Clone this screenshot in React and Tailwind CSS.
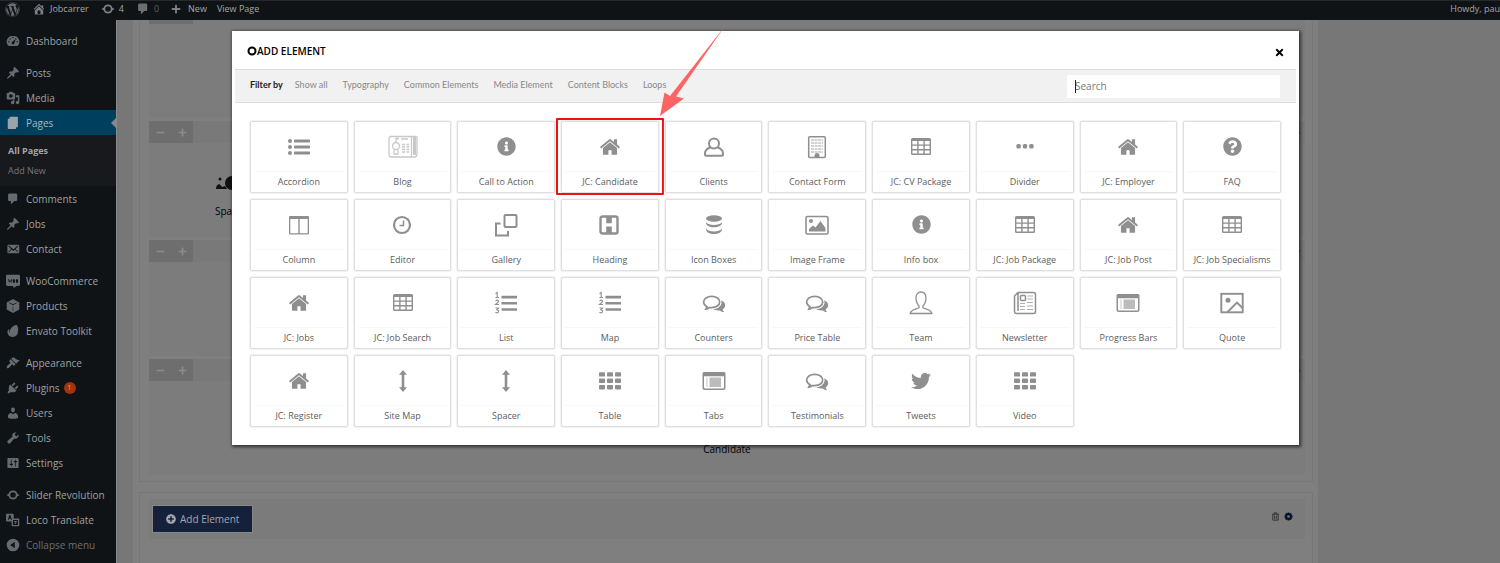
import React from "react";
import { FaWordpress, FaTwitter, FaPlus, FaMinus, FaTimes, FaInfoCircle, FaQuestionCircle, FaPlusCircle } from "react-icons/fa";

const Dash = ({ d, className = "size-[14px]" }) => (
  <svg viewBox="0 0 20 20" fill="currentColor" fillRule="evenodd" className={className} aria-hidden="true">
    <path d={d} />
  </svg>
);

const paths = {
  home: "M16 8.5l1.53 1.53-1.06 1.06L10 4.6l-6.47 6.49-1.06-1.06L10 2.5l4 4v-2h2v4zm-6-2.46l6 5.99V18H4v-5.97zM12 17v-5H8v5h4z",
  dashboard:
    "M3.76 17h12.48A7.998 7.998 0 0 0 10 3a7.998 7.998 0 0 0-6.24 14zM10 4c.55 0 1 .45 1 1s-.45 1-1 1-1-.45-1-1 .45-1 1-1zM6 6c.55 0 1 .45 1 1s-.45 1-1 1-1-.45-1-1 .45-1 1-1zm8 0c.55 0 1 .45 1 1s-.45 1-1 1-1-.45-1-1 .45-1 1-1zm-5.37 5.55L14 7l-2 6c0 1.1-.9 2-2 2s-2-.9-2-2c0-.57.24-1.08.63-1.45zM4 10c.55 0 1 .45 1 1s-.45 1-1 1-1-.45-1-1 .45-1 1-1zm12 0c.55 0 1 .45 1 1s-.45 1-1 1-1-.45-1-1 .45-1 1-1z",
  pin: "M10.44 3.02l1.82-1.82 6.36 6.35-1.83 1.82c-1.05-.68-2.48-.57-3.41.36l-.75.75c-.92.93-1.04 2.35-.35 3.41l-1.83 1.82-2.41-2.41-2.8 2.79c-.42.42-3.38 2.71-3.8 2.29s1.86-3.39 2.28-3.81l2.79-2.79L4.1 9.36l1.83-1.82c1.05.69 2.48.57 3.4-.36l.75-.75c.93-.92 1.05-2.35.36-3.41z",
  media:
    "M13 11V4c0-.55-.45-1-1-1h-1.67L9 1H5L3.67 3H2c-.55 0-1 .45-1 1v7c0 .55.45 1 1 1h10c.55 0 1-.45 1-1zM7 4.5c1.38 0 2.5 1.12 2.5 2.5S8.38 9.5 7 9.5 4.5 8.38 4.5 7 5.62 4.5 7 4.5zM14 6h5v10.5c0 1.38-1.12 2.5-2.5 2.5S14 17.88 14 16.5s1.12-2.5 2.5-2.5c.17 0 .34.02.5.05V9h-3V6zm-4 8.05V13h2v3.5c0 1.38-1.12 2.5-2.5 2.5S7 17.88 7 16.5 8.12 14 9.5 14c.17 0 .34.02.5.05z",
  page: "M6 1h10a1 1 0 0 1 1 1v13a1 1 0 0 1-1 1h-1.5v1.500a1 1 0 0 1-1 1H3.500a1 1 0 0 1-1-1V5a1 1 0 0 1 1-1H5V2a1 1 0 0 1 1-1z",
  comment: "M5 2h9c1.100 0 2 .9 2 2v7c0 1.100-.9 2-2 2h-2l-5 5v-5H5c-1.100 0-2-.9-2-2V4c0-1.100.9-2 2-2z",
  mail: "M19 14.5v-9c0-.83-.67-1.5-1.5-1.5H3.49c-.83 0-1.5.67-1.5 1.5v9c0 .83.67 1.5 1.5 1.5H17.5c.83 0 1.5-.67 1.5-1.5zm-1.31-9.11c.33.33.15.67-.03.84L13.6 9.95l3.9 4.06c.12.14.2.36.06.51-.13.16-.43.15-.56.05l-4.37-3.73-2.14 1.95-2.13-1.95-4.37 3.73c-.13.1-.43.11-.56-.05-.14-.15-.06-.37.06-.51l3.9-4.06-4.06-3.72c-.18-.17-.36-.51-.03-.84s.67-.17.95.07l6.24 5.04 6.25-5.04c.28-.24.62-.4.95-.07z",
  appearance:
    "M14.48 11.06L7.41 3.99l1.5-1.5c.5-.56 2.3-.47 3.51.32 1.21.8 1.43 1.28 2.91 2.1 1.18.64 2.45 1.26 4.45.85zm-.71.71L6.7 4.7 4.93 6.47c-.39.39-.39 1.02 0 1.41l1.06 1.06c.39.39.39 1.03 0 1.42-.6.6-1.43 1.11-2.21 1.69-.35.26-.7.53-1.01.84C1.43 14.23.4 16.08 1.4 17.07c.99 1 2.84-.03 4.18-1.36.31-.31.58-.66.85-1.02.57-.78 1.08-1.61 1.69-2.21.39-.39 1.02-.39 1.41 0l1.06 1.06c.39.39 1.02.39 1.41 0z",
  plugins:
    "M13.11 4.36L9.87 7.6 8 5.73l3.24-3.24c.35-.34 1.05-.2 1.56.32.52.51.66 1.21.31 1.55zm-8 1.77l.91-1.12 9.01 9.01-1.19.84c-.71.71-2.63 1.16-3.82 1.16H6.14L4.9 17.26c-.59.59-1.54.59-2.12 0-.59-.58-.59-1.53 0-2.12l1.24-1.24v-3.88c0-1.13.4-3.19 1.09-3.89zm7.26 3.97l3.24-3.24c.34-.35 1.04-.21 1.55.31.52.51.66 1.21.31 1.55l-3.24 3.25z",
  users:
    "M10 9.25c-2.27 0-2.73-3.44-2.73-3.44C7 4.02 7.82 2 9.97 2c2.16 0 2.98 2.02 2.71 3.81 0 0-.41 3.44-2.68 3.44zm0 2.57L12.72 10c2.39 0 4.52 2.33 4.52 4.53v2.49s-3.65 1.13-7.24 1.13c-3.65 0-7.24-1.13-7.24-1.13v-2.49c0-2.25 1.94-4.48 4.47-4.48z",
  tools:
    "M16.68 9.77c-1.34 1.34-3.3 1.67-4.95.99l-5.41 6.52c-.99.99-2.59.99-3.58 0s-.99-2.59 0-3.57l6.52-5.42c-.68-1.65-.35-3.61.99-4.95 1.28-1.28 3.12-1.62 4.72-1.06l-2.89 2.89 2.82 2.82 2.86-2.87c.53 1.58.18 3.39-1.08 4.65z",
  settings:
    "M18 16V4c0-.55-.45-1-1-1H3c-.55 0-1 .45-1 1v12c0 .55.45 1 1 1h14c.55 0 1-.45 1-1zM8 11h1c.55 0 1 .45 1 1s-.45 1-1 1H8v1.5c0 .28-.22.5-.5.5s-.5-.22-.5-.5V13H6c-.55 0-1-.45-1-1s.45-1 1-1h1V5.5c0-.28.22-.5.5-.5s.5.22.5.5V11zm5-2h-1c-.55 0-1-.45-1-1s.45-1 1-1h1V5.5c0-.28.22-.5.5-.5s.5.22.5.5V7h1c.55 0 1 .45 1 1s-.45 1-1 1h-1v5.5c0 .28-.22.5-.5.5s-.5-.22-.5-.5V9z",
  update:
    "M10 3.500a6.500 6.500 0 0 1 6.200 4.700L19.500 10l-3.300 1.800a6.500 6.500 0 0 1-12.400 0L.5 10l3.300-1.800A6.500 6.500 0 0 1 10 3.500zM10 6a4 4 0 1 0 0 8 4 4 0 1 0 0-8z",
  woo: "M2 1h16a2 2 0 0 1 2 2v12a2 2 0 0 1-2 2h-3l-4 3-1-3H2a2 2 0 0 1-2-2V3a2 2 0 0 1 2-2zm1 6l1.500 6L6 9.500 7.500 13 8.500 7H7.600L7 10 6 8l-1.200 2L4 7zm6.500 3a1.700 3 0 1 0 3.400 0 1.700 3 0 1 0-3.400 0zm4.500 0a1.700 3 0 1 0 3.400 0 1.700 3 0 1 0-3.400 0z",
  products:
    "M10 0l9 5v10l-9 5-9-5V5zM4 5.500l6 3.300 6-3.300-.8-.6L10 7.600 4.900 4.900zM9.600 11v6.500h.8V11z",
  envato: "M15.500 1.500c2.500 3 2.500 10 .5 13.500-2 3.400-7.500 4.800-11 2.200C1.500 14.500 1.500 10 3.500 8c.6-.6 1.300-.2 1.200.6-.3 2 0 3.400.7 4.400C4.500 7.500 9 2 15.500 1.500z",
  collapse: "M10 1a9 9 0 1 0 0 18 9 9 0 1 0 0-18zm2.500 4.500v9L6 10z",
  translate:
    "M1 1h9a1 1 0 0 1 1 1v6h7a1 1 0 0 1 1 1v9a1 1 0 0 1-1 1H9a1 1 0 0 1-1-1v-6H1a1 1 0 0 1-1-1V2a1 1 0 0 1 1-1zm3.800 2L2.500 9.500H4L4.500 8h2L7 9.500h1.500L6.200 3zM10 10v7h7v-7zm1.500 1.500h4v1.200h-1v3h-2v-1.200h.8v-1.800h-1.800z",
};

const menu = [
  [{ label: "Dashboard", icon: "dashboard" }],
  [
    { label: "Posts", icon: "pin" },
    { label: "Media", icon: "media" },
    { label: "Pages", icon: "page", active: true, sub: ["All Pages", "Add New"] },
    { label: "Comments", icon: "comment" },
    { label: "Jobs", icon: "pin" },
    { label: "Contact", icon: "mail" },
  ],
  [
    { label: "WooCommerce", icon: "woo" },
    { label: "Products", icon: "products" },
    { label: "Envato Toolkit", icon: "envato" },
  ],
  [
    { label: "Appearance", icon: "appearance" },
    { label: "Plugins", icon: "plugins", badge: "1" },
    { label: "Users", icon: "users" },
    { label: "Tools", icon: "tools" },
    { label: "Settings", icon: "settings" },
  ],
  [
    { label: "Slider Revolution", icon: "update" },
    { label: "Loco Translate", icon: "translate" },
    { label: "Collapse menu", icon: "collapse", muted: true },
  ],
];

/* Element glyphs share one 24x24 canvas */
const Glyph = ({ children }) => (
  <svg viewBox="0 0 24 24" fill="currentColor" className="size-6" aria-hidden="true">
    {children}
  </svg>
);

const line = { fill: "none", stroke: "currentColor", strokeWidth: 1.6 };

const glyphs = {
  list: (
    <Glyph>
      {[6, 12, 18].map((y) => (
        <g key={y}>
          <circle cx="3" cy={y} r="2" />
          <rect x="7" y={y - 1.4} width="16" height="2.800" rx=".6" />
        </g>
      ))}
    </Glyph>
  ),
  blog: (
    <svg viewBox="0 0 30 24" className="h-6 w-[30px] text-[#c8c8c8]" fill="none" stroke="currentColor" strokeWidth="1.300" aria-hidden="true">
      <path d="M1 3.500q0-2 2-2h20.500v20.500H3q-2 0-2-2z M23.500 1.500h4q1.500 0 1.500 1.500v16q0 3-2.800 3h-2.700z" />
      <path d="M26.500 2v18" strokeWidth="3" />
      <circle cx="8" cy="11" r="3.500" />
      <path d="M8 7V3.500h3 M13 4h7 M6 14.500V19h4v-4.500 M14 9.500h3 M14 12h3 M14 14.500h3 M14 17h3 M18.500 9.500h2.500 M18.500 12h2.500 M18.500 14.500h2.500 M18.500 17h2.500" />
    </svg>
  ),
  info: <FaInfoCircle className="size-[19px]" aria-hidden="true" />,
  question: <FaQuestionCircle className="size-[19px]" aria-hidden="true" />,
  home: (
    <svg viewBox="0 0 1792 1792" fill="currentColor" className="size-[22px]" aria-hidden="true">
      <path d="M1472 992v480q0 26-19 45t-45 19h-384v-384h-256v384h-384q-26 0-45-19t-19-45v-480q0-1 .5-3t.5-3l575-474 575 474q1 2 1 6zm223-69l-62 74q-8 9-21 11h-3q-13 0-21-7l-692-577-692 577q-12 8-24 7-13-2-21-11l-62-74q-8-10-7-23.500t11-21.500l719-599q32-26 76-26t76 26l244 204v-195q0-14 9-23t23-9h192q14 0 23 9t9 23v408l219 182q10 8 11 21.500t-7 23.500z" />
    </svg>
  ),
  person: (
    <Glyph>
      <path {...line} strokeWidth="2" d="M8.500 12.500C5 13.500 3 15.500 3 18.500v1.200q0 1 1 1h16q1 0 1-1v-1.200c0-3-2-5-5.500-6" />
      <circle {...line} strokeWidth="2" cx="12" cy="8.500" r="5" />
    </Glyph>
  ),
  form: (
    <Glyph>
      <rect {...line} strokeWidth="1.500" x="3.700" y="1.800" width="16.600" height="20.800" rx="1" />
      <path {...line} strokeWidth="1" strokeDasharray="3 .6" opacity=".8" d="M6 5h12 M6 8h12 M6 11h12 M6 14h12 M6 17h12" />
      <path d="M9.500 22v-1.500a2.500 2.500 0 0 1 5 0V22z" />
    </Glyph>
  ),
  table: (
    <Glyph>
      <path fillRule="evenodd" d="M3.500 3h17A1.500 1.500 0 0 1 22 4.500v14a1.500 1.500 0 0 1-1.500 1.500h-17A1.500 1.500 0 0 1 2 18.500v-14A1.500 1.500 0 0 1 3.500 3zM3.400 6v3.400h4.800V6zm6.200 0v3.400h4.800V6zm6.200 0v3.400h4.800V6zM3.400 10.800v3.200h4.800v-3.200zm6.200 0v3.200h4.800v-3.200zm6.200 0v3.200h4.800v-3.200zM3.400 15.400v3.200h4.800v-3.200zm6.200 0v3.200h4.800v-3.200zm6.200 0v3.200h4.800v-3.200z" />
    </Glyph>
  ),
  dots: (
    <Glyph>
      {[5.600, 12, 18.400].map((x) => (
        <rect key={x} x={x - 2.200} y="9" width="4.400" height="4.400" rx="1.500" />
      ))}
    </Glyph>
  ),
  columns: (
    <Glyph>
      <path fillRule="evenodd" d="M3 3h18a1 1 0 0 1 1 1v16.500a1 1 0 0 1-1 1H3a1 1 0 0 1-1-1V4a1 1 0 0 1 1-1zm.3 3v14.200h8V6zm9.400 0v14.200h8V6z" />
    </Glyph>
  ),
  clock: (
    <Glyph>
      <circle {...line} strokeWidth="2.200" cx="11" cy="12" r="8" />
      <path {...line} strokeWidth="1.500" d="M12.500 7.500v5H8.500" />
    </Glyph>
  ),
  gallery: (
    <Glyph>
      <rect {...line} strokeWidth="2" x="10.500" y="2" width="12" height="12" rx="1" />
      <path {...line} strokeWidth="2" d="M6.500 10.500h-4.500v12h12v-4.500" />
    </Glyph>
  ),
  heading: (
    <Glyph>
      <rect {...line} strokeWidth="2.400" x="2.500" y="3.500" width="17" height="17" rx="2" />
      <path d="M8.200 4h5.600v6.200H8.200z M8.200 13.500h5.600V20H8.200z" />
    </Glyph>
  ),
  database: (
    <Glyph>
      <ellipse cx="12" cy="5.500" rx="8" ry="3.200" />
      <path d="M4 9.200c1.500 2 4.500 2.700 8 2.700s6.500-.7 8-2.700c.3 3.500-3.500 5-8 5s-8.300-1.500-8-5z M4 15.500c1.500 2.200 4.500 3 8 3s6.500-.8 8-3c.3 3.700-3.500 5.500-8 5.500s-8.300-1.800-8-5.500z" />
    </Glyph>
  ),
  image: (
    <Glyph>
      <rect {...line} x="1" y="3.500" width="22" height="17.500" rx="1.500" />
      <circle cx="6" cy="8" r="2" />
      <path d="M4 18.500v-2.500l4-3.500 2.500 2 5-6.500 5 7v3.500z" />
    </Glyph>
  ),
  numbers: (
    <Glyph>
      <path d="M7.500 4.800h15.500v2.600H7.500z M7.500 11h15.500v2.600H7.500z M7.500 17.200h15.500v2.600H7.500z" />
      <path {...line} strokeWidth="1.100" d="M1.500 2.500l1.700-1v5 M1.500 6.500h3.500 M1.500 9.800q3-1.500 3 .5 0 1-3 3.200h3.500 M1.500 17h3l-1.700 1.800q2 .2 1.700 2-.8 1.600-3.200.7" />
    </Glyph>
  ),
  comments: (
    <Glyph>
      <path {...line} strokeWidth="1.700" d="M9.700 5.300c4.600 0 8 2.500 8 5.700s-3.400 5.700-8 5.700c-.8 0-1.500-.1-2.200-.2q-1.700 1.400-3.700 1.600l1.200-2.400C3 14.600 1.600 13 1.600 11c0-3.200 3.500-5.700 8.100-5.700z" />
      <path d="M19.200 9.300c2.400 1 4 2.800 4 4.900 0 1.700-1 3.200-2.600 4.200.2 1.100.8 1.900 1.700 2.600-1.700 0-3.300-.7-4.400-1.600-2.600.4-5.200-.1-7-1.300 5.400 0 10-3.600 8.300-8.800z" />
    </Glyph>
  ),
  team: (
    <Glyph>
      <path {...line} strokeWidth="1.300" d="M12 1c3.500 0 5 2.800 5 6.300 0 3.300-1.700 6.700-3 7.500v2c2.500 1.500 8 1.700 8.800 5.700H1.200C2 18.500 7.500 18.300 10 16.800v-2c-1.300-.8-3-4.200-3-7.500C7 3.800 8.500 1 12 1z" />
    </Glyph>
  ),
  news: (
    <Glyph>
      <path {...line} strokeWidth="1.500" d="M5 1.500h15.500q2 0 2 2v17q0 2-2 2H3.500q-2 0-2-2V5z M5 1.500V20" />
      <rect {...line} strokeWidth="1.500" x="7.500" y="4.500" width="5" height="5" rx="1" />
      <path {...line} strokeWidth="1.200" opacity=".7" d="M14.500 5h5.500 M14.500 8h5.500 M7 12.500h5 M14 11.500h6 M7 15.500h5 M14 15h6 M7 18.500h5 M14 18.500h6" />
    </Glyph>
  ),
  browser: (
    <Glyph>
      <path fillRule="evenodd" d="M2 3h20a1.500 1.500 0 0 1 1.500 1.500v14.500a2 2 0 0 1-2 2h-19a2 2 0 0 1-2-2V4.500A1.500 1.500 0 0 1 2 3zm0 4.200v11.300a1 1 0 0 0 1 1h18a1 1 0 0 0 1-1V7.200z" />
      <rect x="7.500" y="8.500" width="11.500" height="9.500" opacity=".6" />
      <rect x="4" y="8.500" width="2" height="9.500" opacity=".25" />
    </Glyph>
  ),
  picture: (
    <Glyph>
      <rect {...line} strokeWidth="1.900" x="1.300" y="2.800" width="21.400" height="18.500" />
      <circle cx="8" cy="9.200" r="2.500" />
      <path {...line} strokeWidth="1.900" d="M7.500 21l9.500-9.500 5.500 5.500" />
    </Glyph>
  ),
  vertical: (
    <Glyph>
      <path d="M12 1l4 4.800h-2.700v12.400H16L12 23l-4-4.800h2.700V5.800H8z" />
    </Glyph>
  ),
  grid: (
    <Glyph>
      {[3.200, 9.600, 16].map((y) =>
        [1, 9, 17].map((x) => <rect key={x + "-" + y} x={x} y={y} width="6" height="4.400" rx=".9" />)
      )}
    </Glyph>
  ),
  twitter: <FaTwitter className="size-5" aria-hidden="true" />,
};

const elements = [
  ["Accordion", "list"], ["Blog", "blog"], ["Call to Action", "info"], ["JC: Candidate", "home"], ["Clients", "person"],
  ["Contact Form", "form"], ["JC: CV Package", "table"], ["Divider", "dots"], ["JC: Employer", "home"], ["FAQ", "question"],
  ["Column", "columns"], ["Editor", "clock"], ["Gallery", "gallery"], ["Heading", "heading"], ["Icon Boxes", "database"],
  ["Image Frame", "image"], ["Info box", "info"], ["JC: Job Package", "table"], ["JC: Job Post", "home"], ["JC: Job Specialisms", "table"],
  ["JC: Jobs", "home"], ["JC: Job Search", "table"], ["List", "numbers"], ["Map", "numbers"], ["Counters", "comments"],
  ["Price Table", "comments"], ["Team", "team"], ["Newsletter", "news"], ["Progress Bars", "browser"], ["Quote", "picture"],
  ["JC: Register", "home"], ["Site Map", "vertical"], ["Spacer", "vertical"], ["Table", "grid"], ["Tabs", "browser"],
  ["Testimonials", "comments"], ["Tweets", "twitter"], ["Video", "grid"],
];

const filters = ["Show all", "Typography", "Common Elements", "Media Element", "Content Blocks", "Loops"];

function TopBar() {
  return (
    <header className="flex h-5 items-center border-t border-[#262a2d] bg-[#0f1315] pb-[3px] pl-[5px] text-[9px] leading-4 text-[#a4a6a8]">
      <a href="#wp" aria-label="WordPress" className="mr-3"><FaWordpress className="size-[15px] text-[#6b6f73]" /></a>
      <a href="#site" className="mr-3 flex items-center gap-1">
        <Dash d={paths.home} className="size-[14px] text-[#7b7f83]" />Jobcarrer
      </a>
      <a href="#updates" className="mr-3 flex items-center gap-1">
        <Dash d={paths.update} className="size-[14px] text-[#7b7f83]" />4
      </a>
      <a href="#comments" className="mr-3 flex items-center gap-1 text-[#5c6063]">
        <Dash d={paths.comment} className="size-[14px] text-[#6b6f73]" />0
      </a>
      <a href="#new" className="mr-[10px] flex items-center gap-[7px]">
        <FaPlus className="size-[10px] text-[#7b7f83]" />New
      </a>
      <a href="#view">View Page</a>
      <a href="#me" className="ml-auto">Howdy, pau</a>
    </header>
  );
}

function MenuItem({ item }) {
  return (
    <li>
      <a
        href={"#" + item.icon}
        className={
          "flex h-[25px] items-center gap-[6px] pl-[6px] text-[10px] leading-4 " +
          (item.active ? "relative bg-[#003f5d] text-[#a8b8c0]" : item.muted ? "text-[#6b6f73]" : "text-[#9fa1a3]")
        }
      >
        <Dash d={paths[item.icon]} className={item.active ? "size-[14px] shrink-0 text-[#9aa5ab]" : "size-[14px] shrink-0 text-[#666b6f]"} />
        <span className="whitespace-nowrap">{item.label}</span>
        {item.badge && (
          <span className="-ml-[2px] flex size-[12px] items-center justify-center rounded-full bg-[#a33408] text-[7px] leading-none text-[#c9b0a5]">
            {item.badge}
          </span>
        )}
        {item.active && (
          <span className="absolute right-0 top-1/2 -translate-y-1/2 border-y-[5px] border-r-[5px] border-y-transparent border-r-[#888888]" />
        )}
      </a>
      {item.sub && (
        <ul className="flex h-[51px] flex-col gap-1 bg-[#17191d] pt-2 text-[9px] leading-4">
          {item.sub.map((s, i) => (
            <li key={s} className="pl-2">
              <a href={"#" + s} className={i === 0 ? "font-bold text-[#a4a6a8]" : "text-[#74787c]"}>{s}</a>
            </li>
          ))}
        </ul>
      )}
    </li>
  );
}

function Gear({ className }) {
  return (
    <svg viewBox="0 0 20 20" className={className} fill="#07102a" fillRule="evenodd" aria-hidden="true">
      <path d="M8 1h4l.6 2.600 2.300-1.400 2.800 2.800-1.300 2.400L19 8v4l-2.600.6 1.300 2.400-2.800 2.800-2.300-1.400L12 19H8l-.6-2.600-2.300 1.400-2.800-2.800 1.300-2.400L1 12V8l2.600-.6L2.300 5l2.800-2.800 2.300 1.400zM10 7a3 3 0 1 0 0 6 3 3 0 1 0 0-6z" />
    </svg>
  );
}

function Panel({ children }) {
  return (
    <div className="flex h-[116px] flex-col bg-[#7c7c7c]">
      <div className="flex h-[22px] items-center justify-between bg-[#797979] pr-[5px]">
        <div className="flex h-full w-11 items-center justify-around bg-[#6e6e6e] text-[#8c8c8c]">
          <button type="button" aria-label="Narrow column"><FaMinus className="size-[9px]" /></button>
          <button type="button" aria-label="Widen column"><FaPlus className="size-[9px]" /></button>
        </div>
        <Gear className="size-[9px]" />
      </div>
      {children}
    </div>
  );
}

function Builder() {
  return (
    <main className="min-w-0 flex-1 border-l border-[#888888] bg-[#777777]">
      <div className="ml-4 mr-[182px] h-full bg-[#7f7f7f] pl-[6px] pr-[5px]">
        <section className="flex flex-col gap-[3px] border border-t-0 border-[#777777] pb-[6px] pl-[9px] pr-[7px]">
          <div className="h-[98px] bg-[#7c7c7c]">
            <div className="h-1 w-11 bg-[#6e6e6e]" />
          </div>
          <Panel>
            <div className="flex flex-col items-start gap-3 pl-[66px] pt-8 text-[10px] leading-4 text-black">
              <svg viewBox="0 0 32 16" className="h-4 w-8" fill="#111111" aria-hidden="true">
                <circle cx="5" cy="4" r="1.500" />
                <path d="M1 14q0-4 3-5 2 1 3 3l3-1 2 3z" />
                <circle cx="17" cy="8" r="7" />
              </svg>
              Spacer
            </div>
          </Panel>
          <Panel />
          <Panel>
            <p className="pt-[60px] text-center text-[10px] leading-4 text-black">Candidate</p>
          </Panel>
        </section>
        <section className="mt-[10px] h-[120px] border border-[#777777] pl-[9px] pr-[7px] pt-[6px]">
          <div className="flex h-10 items-center justify-between bg-[#7b7b7b] pl-1 pr-3">
            <button type="button" className="flex h-[26px] items-center gap-1 bg-[#15203b] px-[13px] text-[10px] leading-4 text-[#a3a6ad] outline outline-1 outline-[#888888]">
              <FaPlusCircle className="size-[10px]" />
              Add Element
            </button>
            <div className="flex items-center gap-1 pb-[5px]">
              <button type="button" aria-label="Delete">
                <svg viewBox="0 0 20 20" className="size-[9px]" fill="none" stroke="#35333a" strokeWidth="2.200" aria-hidden="true">
                  <path d="M2 5h16 M7 5V2h6v3 M4 5v13h12V5 M8 8v7 M12 8v7" />
                </svg>
              </button>
              <button type="button" aria-label="Configure"><Gear className="size-[9px]" /></button>
            </div>
          </div>
        </section>
      </div>
    </main>
  );
}

function ElementTile({ label, icon, highlighted }) {
  return (
    <li className="relative">
      <button
        type="button"
        className="flex h-[72px] w-full flex-col rounded-[2px] border border-[#dfdfdf] bg-white px-[3px] text-[9px] leading-5 text-[#5c5c5c] shadow-[0_0_1px_1px_#f1f1f1]"
      >
        <span className="flex h-[50px] w-full items-center justify-center text-[#8f8f8f]">{glyphs[icon]}</span>
        <span className="w-full whitespace-nowrap border-t border-[#f8f8f8] text-center">{label}</span>
      </button>
      {highlighted && (
        <>
          <span className="pointer-events-none absolute -inset-x-[5px] -bottom-[2px] -top-[3px] rounded-[1px] border-2 border-[#f01010]" />
          <svg viewBox="0 0 68 92" className="pointer-events-none absolute -top-[96px] left-[98px] h-[92px] w-[68px]" fill="#ff6464" aria-hidden="true">
            <path d="M66 1L11 71l-5.500-3.500L1 91l24-17.500-8-2z" />
          </svg>
        </>
      )}
    </li>
  );
}

function AddElementDialog() {
  return (
    <div role="dialog" aria-labelledby="dialog-title" className="absolute left-[232px] right-[201px] top-[31px] bg-white pb-[18px] shadow-[1px_1px_3px_1px_rgba(0,0,0,0.6)]">
      <div className="flex h-[38px] items-center justify-between pl-[15px] pr-[14px] pt-[2px]">
        <h2 id="dialog-title" className="flex items-center text-[10px] font-semibold leading-4 text-black">
          <svg viewBox="0 0 20 20" className="size-[10px]" fill="none" stroke="currentColor" aria-hidden="true">
            <circle cx="10" cy="10" r="7" strokeWidth="4" />
          </svg>
          ADD ELEMENT
        </h2>
        <button type="button" aria-label="Close" className="pt-[2px] text-black"><FaTimes className="size-[11px]" /></button>
      </div>
      <div className="mx-[3px] flex h-[34px] items-center justify-between border-y border-[#dddddd] bg-[#f1f1f1] pl-[15px] pr-[16px]">
        <div className="flex items-center gap-[15px] whitespace-nowrap pb-[2px] font-['Lato','Noto_Sans',sans-serif] text-[9px] leading-4 text-[#888888]">
          <span className="-mr-[3px] font-bold text-[#222222]">Filter by</span>
          {filters.map((f) => (
            <button type="button" key={f}>{f}</button>
          ))}
        </div>
        <div className="relative">
          <input
            type="text"
            aria-label="Search"
            placeholder="Search"
            className="block h-[23px] w-[213px] bg-white pl-2 text-[10px] text-[#555555] placeholder:text-[#777777] outline-none"
          />
          <span className="absolute left-2 top-[5px] h-[13px] w-px bg-[#222222]" />
        </div>
      </div>
      <ul className="mt-[18px] grid grid-cols-10 gap-[6px] px-[18px]">
        {elements.map(([label, icon]) => (
          <ElementTile key={label} label={label} icon={icon} highlighted={label === "JC: Candidate"} />
        ))}
      </ul>
    </div>
  );
}

export default function App() {
  return (
    <div className="relative flex h-screen flex-col overflow-hidden bg-[#777777] font-['Open_Sans','Noto_Sans',sans-serif]">
      <TopBar />
      <div className="flex min-h-0 flex-1">
        <nav aria-label="Admin menu" className="flex w-[116px] shrink-0 flex-col gap-[7px] bg-[#0f1315] pt-2">
          {menu.map((group, i) => (
            <ul key={i}>
              {group.map((item) => (
                <MenuItem key={item.label} item={item} />
              ))}
            </ul>
          ))}
        </nav>
        <Builder />
      </div>
      <AddElementDialog />
    </div>
  );
}
